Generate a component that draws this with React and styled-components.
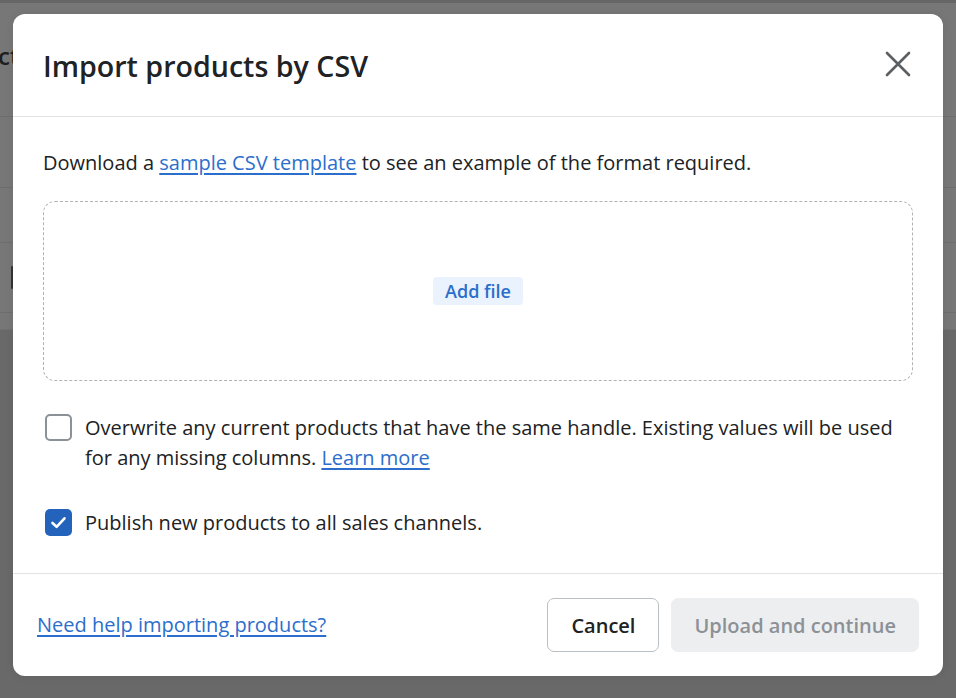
import React from "react";
import styled, { createGlobalStyle } from "styled-components";

const Global = createGlobalStyle`
  html, body { margin: 0; padding: 0; }
  body {
    width: 956px;
    height: 698px;
    overflow: hidden;
    background: #6a6a6a;
    font-family: "Open Sans", "Noto Sans", sans-serif;
    color: #202223;
    -webkit-font-smoothing: antialiased;
  }
`;

const Screen = styled.div`
  position: relative;
  width: 956px;
  height: 698px;
  overflow: hidden;
  background: #696969;
`;

const TopBar = styled.div`
  height: 3px;
  background: #666666;
`;

const BgCard = styled.div`
  display: flex;
  flex-direction: column;
  background: #777777;
  border-bottom: 1px solid #707070;
`;

const BgRow = styled.div`
  display: flex;
  align-items: center;
  height: ${(p) => p.$h}px;
  border-bottom: ${(p) => (p.$last ? "none" : "1px solid #6e6e6e")};
`;

const BgTitle = styled.span`
  font-family: "Open Sans", sans-serif;
  font-size: 24px;
  font-weight: 600;
  color: #1e1e1e;
  margin-left: -2px;
  margin-top: -8px;
`;

const BgMark = styled.span`
  display: block;
  width: 2px;
  height: 23px;
  margin-left: 11px;
  background: #333333;
  border-radius: 1px;
`;

const Overlay = styled.div`
  position: absolute;
  inset: 0;
  display: flex;
  justify-content: center;
  align-items: flex-start;
  padding-top: 14px;
`;

const Modal = styled.div`
  width: 930px;
  background: #ffffff;
  border-radius: 12px;
  overflow: hidden;
  display: flex;
  flex-direction: column;
  box-shadow: 0 0 10px rgba(0, 0, 0, 0.08);
`;

const Header = styled.div`
  height: 103px;
  box-sizing: border-box;
  display: flex;
  align-items: center;
  justify-content: space-between;
  padding: 2px 30px 0 30px;
  border-bottom: 1px solid #e1e3e5;
`;

const Title = styled.h2`
  margin: 0;
  font-size: 28.6px;
  line-height: 36px;
  font-weight: 560;
  color: #202223;
`;

const CloseButton = styled.button`
  display: flex;
  align-items: center;
  justify-content: center;
  width: 36px;
  height: 36px;
  margin-right: -3px;
  margin-top: -4px;
  padding: 0;
  border: none;
  background: transparent;
  color: #5c5f62;
  cursor: pointer;
`;

const Body = styled.div`
  display: flex;
  flex-direction: column;
  padding: 31px 30px 35px 30px;
  border-bottom: 1px solid #e1e3e5;
`;

const Text = styled.p`
  margin: 0;
  font-size: 20px;
  line-height: 30px;
  color: #202223;
`;

const Link = styled.a`
  color: #2c6ecb;
  text-decoration: underline;
  text-underline-offset: 3px;
  text-decoration-thickness: 1.5px;
  cursor: pointer;
`;

const DropZone = styled.div`
  margin-top: 23px;
  height: 180px;
  box-sizing: border-box;
  border: 1px dashed #b0b3b6;
  border-radius: 12px;
  display: flex;
  align-items: center;
  justify-content: center;
`;

const AddFile = styled.button`
  border: none;
  background: #eaf2fd;
  color: #2c6ecb;
  font-family: inherit;
  font-size: 18px;
  font-weight: 600;
  line-height: 24px;
  padding: 2px 12px 2px 12px;
  border-radius: 4px;
  cursor: pointer;
`;

const CheckRow = styled.label`
  display: flex;
  align-items: flex-start;
  gap: 13px;
  margin-top: ${(p) => p.$mt}px;
  padding-left: 2px;
  cursor: pointer;
`;

const Box = styled.span`
  flex: none;
  width: 27px;
  height: 27px;
  box-sizing: border-box;
  margin-top: 1px;
  border-radius: 5px;
  border: ${(p) => (p.$checked ? "none" : "2px solid #8c9196")};
  background: ${(p) => (p.$checked ? "#2463bc" : "#ffffff")};
  display: flex;
  align-items: center;
  justify-content: center;
  color: #ffffff;
`;

const CheckText = styled.span`
  font-size: 20px;
  line-height: 30px;
  color: #202223;
`;

const Footer = styled.div`
  display: flex;
  align-items: center;
  justify-content: space-between;
  padding: 24px 24px 24px 24px;
`;

const FooterLink = styled(Link)`
  font-size: 20px;
  line-height: 30px;
`;

const Actions = styled.div`
  display: flex;
  gap: 12px;
`;

const Button = styled.button`
  height: 54px;
  box-sizing: border-box;
  padding: 0 ${(p) => (p.$disabled ? 22 : 23)}px;
  border-radius: 7px;
  font-family: inherit;
  font-size: 20px;
  font-weight: 600;
  cursor: ${(p) => (p.$disabled ? "default" : "pointer")};
  border: ${(p) => (p.$disabled ? "1px solid #eceef0" : "1px solid #babfc3")};
  background: ${(p) => (p.$disabled ? "#eceef0" : "#ffffff")};
  color: ${(p) => (p.$disabled ? "#8c9196" : "#202223")};
`;

const CloseIcon = () => (
  <svg width="26" height="26" viewBox="0 0 26 26" fill="none">
    <path d="M2 2 L24 24 M24 2 L2 24" stroke="currentColor" strokeWidth="2.6" strokeLinecap="round" />
  </svg>
);

const CheckIcon = () => (
  <svg width="19" height="19" viewBox="0 0 19 19" fill="none">
    <path d="M3.5 10 L7.6 13.8 L15.5 5.3" stroke="currentColor" strokeWidth="2.6" strokeLinecap="round" strokeLinejoin="round" />
  </svg>
);

export default function App() {
  return (
    <Screen>
      <Global />
      <TopBar />
      <BgCard>
        <BgRow $h={113}>
          <BgTitle>ct</BgTitle>
        </BgRow>
        <BgRow $h={70} />
        <BgRow $h={54} />
        <BgRow $h={69}>
          <BgMark />
        </BgRow>
        <BgRow $h={16} $last />
      </BgCard>
      <Overlay>
        <Modal role="dialog" aria-label="Import products by CSV">
          <Header>
            <Title>Import products by CSV</Title>
            <CloseButton aria-label="Close">
              <CloseIcon />
            </CloseButton>
          </Header>
          <Body>
            <Text>
              Download a <Link>sample CSV template</Link> to see an example of the format required.
            </Text>
            <DropZone>
              <AddFile>Add file</AddFile>
            </DropZone>
            <CheckRow $mt={32}>
              <Box />
              <CheckText>
                Overwrite any current products that have the same handle. Existing values will be used
                for any missing columns. <Link>Learn more</Link>
              </CheckText>
            </CheckRow>
            <CheckRow $mt={35}>
              <Box $checked>
                <CheckIcon />
              </Box>
              <CheckText>Publish new products to all sales channels.</CheckText>
            </CheckRow>
          </Body>
          <Footer>
            <FooterLink>Need help importing products?</FooterLink>
            <Actions>
              <Button>Cancel</Button>
              <Button $disabled>Upload and continue</Button>
            </Actions>
          </Footer>
        </Modal>
      </Overlay>
    </Screen>
  );
}
